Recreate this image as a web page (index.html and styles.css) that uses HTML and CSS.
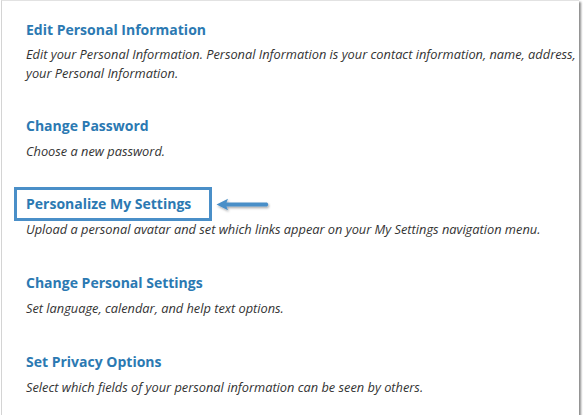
FILE: index.html
```html
<!DOCTYPE html>
<html>
<head>
<meta charset="utf-8">
<link rel="stylesheet" href="styles.css">
</head>
<body>
<div class="frame">
  <div class="item first">
    <div class="title">Edit Personal Information</div>
    <div class="desc">Edit your Personal Information. Personal Information is your contact information, name, address, your Personal Information.</div>
  </div>
  <div class="item">
    <div class="title">Change Password</div>
    <div class="desc">Choose a new password.</div>
  </div>
  <div class="item highlighted">
    <div class="title-wrap">
      <div class="title boxed">Personalize My Settings</div>
      <svg class="arrow" width="60" height="18" viewBox="0 0 60 18">
        <defs>
          <filter id="sh" x="-20%" y="-50%" width="140%" height="200%">
            <feDropShadow dx="1" dy="1.5" stdDeviation="1" flood-color="#000" flood-opacity="0.35"/>
          </filter>
        </defs>
        <g filter="url(#sh)">
          <path d="M1.5 8.5 L13 2.8 L11.5 6.6 L52 6.4 Q54.5 8.5 52 10.6 L11.5 10.4 L13 14.2 Z" fill="#4a8fc8"/>
        </g>
      </svg>
    </div>
    <div class="desc">Upload a personal avatar and set which links appear on your My Settings navigation menu.</div>
  </div>
  <div class="item after">
    <div class="title">Change Personal Settings</div>
    <div class="desc">Set language, calendar, and help text options.</div>
  </div>
  <div class="item after">
    <div class="title">Set Privacy Options</div>
    <div class="desc">Select which fields of your personal information can be seen by others.</div>
  </div>
</div>
</body>
</html>
```
FILE: styles.css
```css
html, body {
  margin: 0;
  padding: 0;
  background: #fff;
}
.frame {
  margin-left: 1px;
  width: 578px;
  height: 415px;
  border-left: 1px solid #d4d4d4;
  border-top: 1px solid #e2e2e2;
  box-shadow: 2px 2px 2px rgba(0, 0, 0, 0.45);
  background: #fff;
  padding: 0 0 0 24px;
  box-sizing: border-box;
  font-family: "Open Sans", sans-serif;
  display: flex;
  flex-direction: column;
}
.item {
  display: flex;
  flex-direction: column;
}
.item.first {
  margin-top: 19px;
}
.item + .item {
  margin-top: 33px;
}
.item.after {
  margin-top: 34px;
}
.title {
  font-size: 14px;
  font-weight: 700;
  color: #2b79b2;
  line-height: 20px;
}
.desc {
  margin-top: 6px;
  font-size: 12.8px;
  font-style: italic;
  color: #333;
  line-height: 19px;
  padding-right: 2px;
}
.first .desc {
  margin-top: 5px;
}
.title-wrap {
  position: relative;
  display: flex;
  align-items: center;
  margin-left: -12px;
  margin-top: -7px;
  margin-bottom: -7px;
}
.title.boxed {
  border: 3px solid #4a8fc8;
  padding: 4px 18px 4px 9px;
}
.arrow {
  margin-left: 3px;
  margin-top: 2px;
}
```
